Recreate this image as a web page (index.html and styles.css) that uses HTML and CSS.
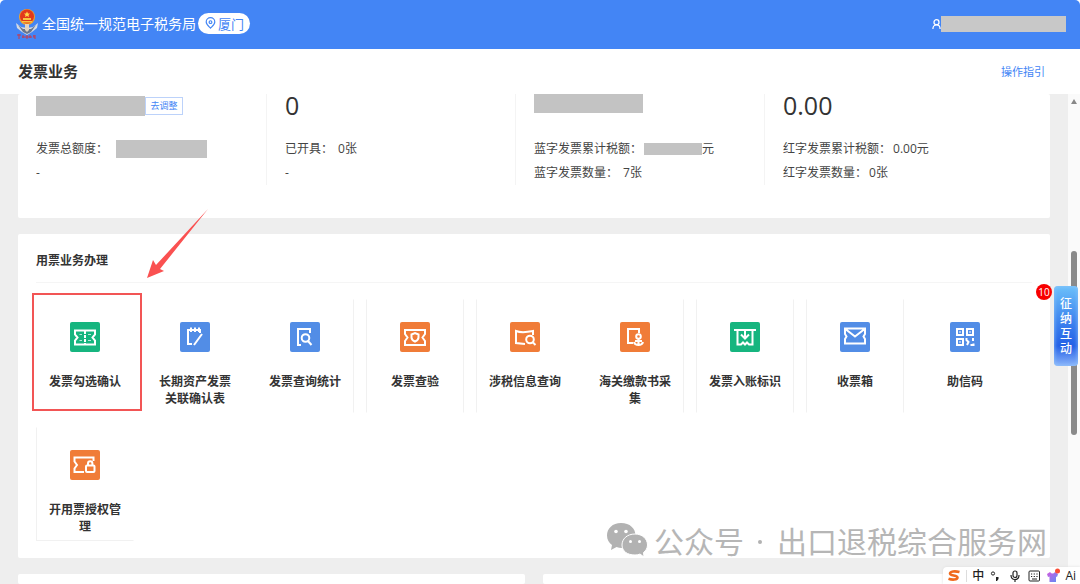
FILE: index.html
```html
<!DOCTYPE html>
<html lang="zh-CN">
<head>
<meta charset="utf-8">
<meta name="viewport" content="width=device-width, initial-scale=1">
<title>发票业务</title>
<link rel="stylesheet" href="styles.css">
</head>
<body>
<header class="topbar">
  <svg class="emblem" viewBox="0 0 22 32" aria-hidden="true">
    <path d="M0 15 5 19 11 20 17 19 22 15 21 20 16 24 11 27 6 24 1 20Z" fill="#d3dae6"/>
    <path d="M2 17 7 21 15 21 20 17 15 24 11 26 7 24Z" fill="#66758e"/>
    <circle cx="11" cy="9" r="8" fill="#f0a02c"/>
    <circle cx="11" cy="8.500" r="7" fill="#e2391c"/>
    <path d="M11 3.500 12 5.500 14 5.600 12.500 7 13 9 11 8 9 9 9.500 7 8 5.600 10 5.500Z" fill="#ffd84a"/>
    <path d="M7 10H15V12H7ZM6 13H16V14.500H6Z" fill="#f8c341"/>
    <path d="M9 16H13V22L11 24 9 22Z" fill="#e3d3c0"/>
    <path d="M1 27H5M3 26V31M6 29H9M7 27V30M10 28H12V30H10ZM13 29H16M14 27V30M17 28H20M18 27V30H20" stroke="#c73a4c" fill="none"/>
  </svg>
  <span class="brand">全国统一规范电子税务局</span>
  <button class="region" type="button">
    <svg viewBox="0 0 12 14" aria-hidden="true"><path d="M6 13C3 10 1 8.500 1 5.800A5 5 0 0 1 11 5.800C11 8.500 9 10 6 13Z"/><circle cx="6" cy="6" r="1.600"/></svg>厦门
  </button>
  <div class="user">
    <svg viewBox="0 0 10 12" aria-hidden="true"><circle cx="5" cy="4" r="2.800"/><path d="M1 11.500C1 8.500 3 7 5 7S9 8.500 9 11.500"/></svg>
    <span class="mask mask-user"></span>
  </div>
</header>

<div class="titlebar">
  <h1>发票业务</h1>
  <a href="#guide">操作指引</a>
</div>

<div class="viewport">
  <main class="content">
    <section class="card stats">
      <div class="stat">
        <div class="figure"><span class="mask mask-quota"></span><button class="adjust" type="button">去调整</button></div>
        <p>发票总额度：<span class="mask mask-total"></span></p>
        <p>-</p>
      </div>
      <div class="stat">
        <div class="figure">0</div>
        <p>已开具：<span class="value">0张</span></p>
        <p>-</p>
      </div>
      <div class="stat">
        <div class="figure figure-top"><span class="mask mask-blue"></span></div>
        <p>蓝字发票累计税额：<span class="mask mask-tax"></span>元</p>
        <p>蓝字发票数量：<span class="value">7张</span></p>
      </div>
      <div class="stat">
        <div class="figure">0.00</div>
        <p>红字发票累计税额：<span class="near">0.00元</span></p>
        <p>红字发票数量：<span class="near">0张</span></p>
      </div>
    </section>

    <section class="card services">
      <h2>用票业务办理</h2>
      <nav class="tiles">
        <a class="tile" href="#select">
          <svg class="icon green" viewBox="0 0 30 30" aria-hidden="true"><path d="M5 8.500H25V12.500L22.500 15.500 25 18.500V22.500H5V18.500L7.500 15.500 5 12.500Z"/><path d="M15 9V22" stroke-dasharray="3 1"/><path d="M18 12.500H21M18 18.500H21M9.500 12.500H12M9.500 18.500H12" stroke-width=".7"/></svg>
          <span>发票勾选确认</span>
          <i class="highlight"></i>
          <svg class="arrow" viewBox="0 0 62 70" aria-hidden="true"><path d="M61 0 13 60 17 62 0 69 6 51 9 56Z"/></svg>
        </a>
        <a class="tile" href="#assets">
          <svg class="icon blue" viewBox="0 0 30 30" aria-hidden="true"><path d="M12 22H8V8H20V11M11 5.500V10M15 5.500V10M19 5.500V10M22 12 14 23"/></svg>
          <span>长期资产发票关联确认表</span>
        </a>
        <a class="tile edge-right" href="#stats">
          <svg class="icon blue" viewBox="0 0 30 30" aria-hidden="true"><path d="M11 23H8V7H20V11"/><circle cx="15.500" cy="16" r="3.800"/><path d="M18 19 21.500 23"/></svg>
          <span>发票查询统计</span>
        </a>
        <a class="tile edge-left edge-right" href="#verify">
          <svg class="icon orange" viewBox="0 0 30 30" aria-hidden="true"><path d="M5 8H25V12L22.500 15.500 25 19V23H5V19L7.500 15.500 5 12Z"/><path d="M11.500 12.500 15 11 18.500 12.500V15.500C18.500 17.500 17 18.700 15 19.700 13 18.700 11.500 17.500 11.500 15.500Z"/></svg>
          <span>发票查验</span>
        </a>
        <a class="tile edge-left" href="#tax-info">
          <svg class="icon orange" viewBox="0 0 30 30" aria-hidden="true"><path d="M15 22 6 21V9C11 11 18 10 23 9V13"/><circle cx="20" cy="17.500" r="3.800"/><path d="M22.500 20 25.500 23"/></svg>
          <span>涉税信息查询</span>
        </a>
        <a class="tile edge-right" href="#customs">
          <svg class="icon orange" viewBox="0 0 30 30" aria-hidden="true"><path d="M13 21H8V7H19V11"/><circle cx="18.500" cy="14.500" r="2.300"/><path d="M18.500 17V23M15 19H22M14 20C15 24 22 24 23 20"/></svg>
          <span>海关缴款书采集</span>
        </a>
        <a class="tile edge-left edge-right" href="#posting">
          <svg class="icon green" viewBox="0 0 30 30" aria-hidden="true"><path d="M4 8H26M7.500 8V22.500H11L13 20.500 15 22.500 17 20.500 19 22.500H22.500V8M15 8V16M11 12.500 15 16.500 19 12.500"/></svg>
          <span>发票入账标识</span>
        </a>
        <a class="tile edge-left edge-right" href="#inbox">
          <svg class="icon blue" viewBox="0 0 30 30" aria-hidden="true"><path d="M5 6.500H25V12L23.500 14.500 25 17V21.500H5V17L6.500 14.500 5 12ZM6 7.500 15 14.500 24 7.500"/></svg>
          <span>收票箱</span>
        </a>
        <a class="tile" href="#code">
          <svg class="icon blue" viewBox="0 0 30 30" aria-hidden="true"><path d="M7 7H13V13H7ZM17 7H23V13H17ZM7 17H13V23H7ZM16.500 16V18L18.500 20 17 23M23 16V19M20.500 23H23.500V21.500M9.500 10H10.500M19.500 10H20.500M9.500 20H10.500"/></svg>
          <span>助信码</span>
        </a>
        <a class="tile edge-left edge-bottom" href="#authorize">
          <svg class="icon orange" viewBox="0 0 30 30" aria-hidden="true"><path d="M14 22H4.500V18.500L7 15 4.500 11.500V7.500H23.500V11"/><rect x="16" y="15.500" width="8.500" height="6.500" rx="1"/><path d="M18 15V13.500A2.200 2.200 0 0 1 22.400 13.500V15"/></svg>
          <span>开用票授权管理</span>
        </a>
      </nav>
      <div class="watermark">
        <svg viewBox="0 0 42 34" aria-hidden="true">
          <path d="M15 0C6.500 0 1 5.500 1 12.500 1 16.500 3 20 6 22L5 27 10.500 24Q13 25 16 25C24 25 29.500 19.500 29.500 12.500S24 0 15 0Z"/>
          <path class="front" d="M29 11C21 11 16 16 16 22S21 32 29 32Q32 32 34 31L38 34 37.500 29.500C40 27.500 41.500 25 41.500 22 41.500 16 36.500 11 29 11Z"/>
          <g class="eyes"><circle cx="10" cy="8.500" r="1.800"/><circle cx="20" cy="8.500" r="1.800"/><circle cx="24.500" cy="18.500" r="1.500"/><circle cx="33.500" cy="18.500" r="1.500"/></g>
        </svg>
        <span>公众号</span><i class="dot"></i><span>出口退税综合服务网</span>
      </div>
    </section>

    <div class="next-row"><div class="card"></div><div class="card"></div></div>
  </main>
  <div class="rail"><i class="rail-up"></i><i class="rail-thumb"></i></div>
</div>

<button class="chat" type="button">征纳互动<span class="count">10</span></button>

<div class="ime">
  <svg viewBox="0 0 14 12" aria-hidden="true"><path d="M12.500 2C8 .8 3 1.200 3 3.600 3 6 10.500 5 10.500 7.600 10.500 10 5 10 1.500 8.800" fill="none" stroke="#f06a1d" stroke-width="2.600"/></svg>
  <i class="ime-line"></i>
  <span>中</span>
  <svg viewBox="0 0 14 12" aria-hidden="true"><circle cx="4" cy="3.500" r="1.600" fill="none" stroke="#222"/><path d="M7 7H9.500V9L8 11H7Z" fill="#222"/></svg>
  <svg viewBox="0 0 14 12" aria-hidden="true" fill="none" stroke="#222" stroke-width="1.200"><rect x="5" y="1" width="4" height="6.500" rx="2"/><path d="M3 5C3 11 11 11 11 5M7 9.500V12"/></svg>
  <svg viewBox="0 0 14 12" aria-hidden="true" fill="none" stroke="#222"><rect x="2" y="1" width="10.500" height="10" rx="1"/><path d="M4 4H11M4 6.500H11" stroke-dasharray="1.200 1.500"/><path d="M5 9H10"/></svg>
  <svg viewBox="0 0 14 12" aria-hidden="true"><defs><linearGradient id="shirt" x2="1" y2="1"><stop stop-color="#d45ae0"/><stop offset="1" stop-color="#5a8df5"/></linearGradient></defs><path d="M1 4 4 2Q6.500 5 9 2L12 4 11 7 10 6.500V12H3.500V6.500L2 7Z" fill="url(#shirt)"/><circle cx="11.500" cy="1" r="2.500" fill="#fb4d35"/></svg>
  <span>Ai</span>
</div>
</body>
</html>
```

FILE: styles.css
```css
* { box-sizing: border-box; }

body {
  margin: 0;
  min-height: 100vh;
  display: flex;
  flex-direction: column;
  position: relative;
  overflow: hidden;
  background: #fff;
  color: #444;
  font-family: "Open Sans", "Noto Sans CJK SC", sans-serif;
  font-size: 12px;
}

h1, h2, p { margin: 0; }
a { text-decoration: none; }
button { font-family: inherit; padding: 0; cursor: pointer; }
.mask { display: inline-block; background: #c3c3c3; flex: none; }

.topbar {
  height: 49px;
  display: flex;
  align-items: center;
  padding: 0 14px 2px 16px;
  background: #4385f5;
  border-radius: 5px 5px 0 0;
  color: #fff;
}
.emblem { width: 22px; height: 32px; margin-right: 4px; }
.brand { font-size: 14px; line-height: 20px; margin-right: 2px; white-space: nowrap; }
.region {
  display: flex;
  align-items: center;
  gap: 2px;
  height: 21px;
  padding: 0 6px 1px 7px;
  border: 0;
  border-radius: 11px;
  background: #fff;
  color: #4385f5;
  font-size: 13px;
}
.region svg { width: 11px; height: 12px; fill: none; stroke: #4385f5; stroke-width: 1.4; }
.user { display: flex; align-items: center; margin-left: auto; }
.user svg { width: 9px; height: 12px; fill: none; stroke: #fff; stroke-width: 1.4; }
.mask-user { width: 125px; height: 16px; background: #c8c8c8; }

.titlebar {
  height: 45px;
  display: flex;
  align-items: center;
  justify-content: space-between;
  padding: 0 35px 1px 18px;
}
.titlebar h1 { font-size: 15px; line-height: 22px; color: #333; }
.titlebar a { font-size: 11px; color: #4385f5; }

.viewport { flex: 1; display: flex; }
.content {
  flex: 1;
  min-width: 0;
  display: flex;
  flex-direction: column;
  gap: 16px;
  padding: 0 18px;
  background: #eee;
}
.card { background: #fff; border-radius: 2px; }

.stats {
  display: grid;
  grid-template-columns: repeat(4, 1fr);
  padding: 0 18px 33px;
}
.stat { margin-right: 18px; border-right: 1px solid #f4f4f4; white-space: nowrap; }
.stat:last-child { margin-right: 0; border-right: 0; }
.stat p { display: flex; align-items: center; height: 24px; line-height: 24px; }
.figure {
  display: flex;
  align-items: center;
  height: 23px;
  margin-bottom: 20px;
  font-size: 25px;
  line-height: 23px;
  color: #333;
}
.figure-top { align-items: flex-start; }
.mask-quota { width: 109px; height: 20px; }
.mask-blue { width: 109px; height: 19px; }
.mask-total { width: 91px; height: 18px; margin-left: 8px; }
.mask-tax { width: 58px; height: 12px; margin-left: 2px; }
.value { margin-left: 5px; }
.near { margin-left: 2px; }
.adjust {
  width: 38px;
  height: 18px;
  border: 1px solid #bcd2fa;
  background: #fff;
  color: #4385f5;
  font-size: 9px;
  line-height: 16px;
}

.services { position: relative; padding: 0 18px 17px; }
.services h2 {
  height: 49px;
  padding-top: 5px;
  border-bottom: 1px solid #f5f5f5;
  font-size: 12px;
  line-height: 44px;
  color: #333;
}
.tiles {
  display: grid;
  grid-template-columns: repeat(auto-fill, 98px);
  gap: 14px 12px;
  padding-top: 16px;
}
.tile {
  position: relative;
  display: flex;
  flex-direction: column;
  align-items: center;
  gap: 21px;
  height: 114px;
  padding: 22px 11px 0;
  border: 1px solid transparent;
  color: #333;
  font-weight: 700;
  line-height: 17px;
  text-align: center;
}
.edge-left { border-left-color: #f1f1f1; }
.edge-right { border-right-color: #f1f1f1; }
.edge-bottom { border-bottom-color: #f1f1f1; }
.icon { width: 30px; height: 30px; flex: none; border-radius: 2px; fill: none; stroke: #fff; stroke-width: 2; }
.green { background: #16b57f; }
.blue { background: #528de6; }
.orange { background: #f07c38; }

.highlight { position: absolute; inset: -7px -9px 1px -5px; border: 2px solid #f25555; }
.arrow { position: absolute; left: 110px; top: -91px; width: 62px; height: 70px; fill: #fa5151; pointer-events: none; }

.watermark {
  position: absolute;
  right: 3px;
  bottom: 0;
  display: flex;
  align-items: center;
  color: #b6b6b6;
  font-size: 30px;
  line-height: 36px;
  font-family: "Noto Sans CJK SC", sans-serif;
  font-weight: 400;
  white-space: nowrap;
}
.watermark svg { width: 42px; height: 34px; margin-right: 6px; fill: #b2b2b2; }
.watermark .front { stroke: #fff; stroke-width: 1; }
.watermark .eyes { fill: #fff; }
.dot { width: 4px; height: 4px; margin: 4px 15px 0 14px; border-radius: 50%; background: #b2b2b2; }

.next-row { flex: 1; display: grid; grid-template-columns: 1fr 1fr; gap: 18px; min-height: 10px; }

.rail { position: relative; width: 12px; background: #fafafa; }
.rail-up { position: absolute; left: 3px; top: 5px; border: 3px solid transparent; border-top: 0; border-bottom: 5px solid #888; }
.rail-thumb { position: absolute; left: 3px; top: 157px; width: 6px; height: 184px; border-radius: 3px; background: #8a8a8a; }

.chat {
  position: absolute;
  right: 2px;
  top: 286px;
  width: 24px;
  height: 80px;
  padding: 10px 6px;
  border: 0;
  border-radius: 4px;
  background: linear-gradient(#6cc0fa, #3c82ee 45%, #2460e6 75%, #8ab4fa);
  box-shadow: inset 0 0 4px #8fc4fb;
  color: #fff;
  font-size: 12px;
  line-height: 15px;
  font-weight: 500;
}
.count {
  position: absolute;
  left: -18px;
  top: -2px;
  width: 16px;
  height: 16px;
  border-radius: 50%;
  background: #f80000;
  font-size: 10px;
  line-height: 16px;
}

.ime {
  position: absolute;
  right: 0;
  bottom: 0;
  display: flex;
  align-items: center;
  gap: 5px;
  height: 17px;
  padding: 0 4px;
  border-radius: 4px 0 0 0;
  background: #fff;
  box-shadow: 0 0 3px #ddd;
  color: #222;
  font-size: 12px;
  line-height: 17px;
  font-weight: 500;
}
.ime svg { width: 14px; height: 12px; overflow: visible; }
.ime-line { width: 1px; height: 12px; background: #ddd; }
```
